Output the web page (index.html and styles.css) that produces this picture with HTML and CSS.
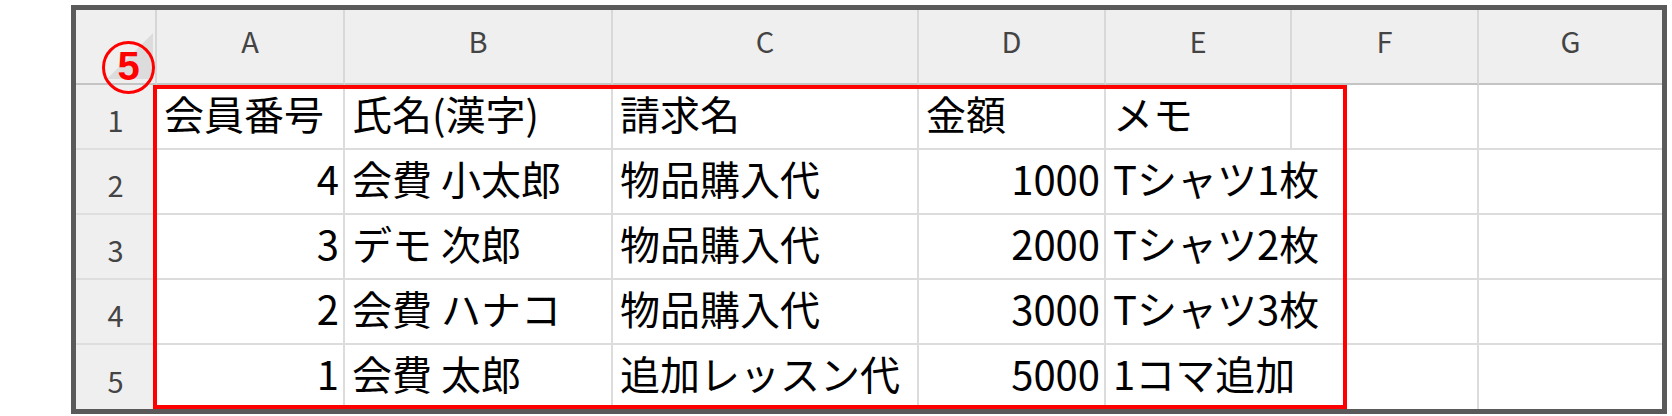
FILE: index.html
```html
<!DOCTYPE html>
<html lang="ja">
<head>
<meta charset="utf-8">
<title>Sheet</title>
<link rel="stylesheet" href="styles.css">
</head>
<body>
<div class="sheet">
  <div class="grid">
    <div class="corner"><svg class="tri" width="79" height="73" viewBox="0 0 79 73"><polygon points="77,23 77,69 31,69" fill="#dcdcdc"/></svg></div>
    <div class="h">A</div><div class="h">B</div><div class="h">C</div><div class="h">D</div><div class="h">E</div><div class="h">F</div><div class="h">G</div>

    <div class="r">1</div><div class="d">会員番号</div><div class="d">氏名(漢字)</div><div class="d">請求名</div><div class="d">金額</div><div class="d">メモ</div><div class="d"></div><div class="d"></div>

    <div class="r">2</div><div class="d num">4</div><div class="d">会費 小太郎</div><div class="d">物品購入代</div><div class="d num">1000</div><div class="d spill">Tシャツ1枚</div><div class="d"></div><div class="d"></div>

    <div class="r">3</div><div class="d num">3</div><div class="d">デモ 次郎</div><div class="d">物品購入代</div><div class="d num">2000</div><div class="d spill">Tシャツ2枚</div><div class="d"></div><div class="d"></div>

    <div class="r">4</div><div class="d num">2</div><div class="d">会費 ハナコ</div><div class="d">物品購入代</div><div class="d num">3000</div><div class="d spill">Tシャツ3枚</div><div class="d"></div><div class="d"></div>

    <div class="r">5</div><div class="d num">1</div><div class="d">会費 太郎</div><div class="d">追加レッスン代</div><div class="d num">5000</div><div class="d spill">1コマ追加</div><div class="d"></div><div class="d"></div>
  </div>
  <div class="highlight"></div>
  <div class="badge">5</div>
</div>
</body>
</html>
```

FILE: styles.css
```css
html, body {
  margin: 0;
  padding: 0;
  background: #ffffff;
}

.sheet {
  position: relative;
  box-sizing: border-box;
  width: 1596px;
  height: 409px;
  margin: 5px 0 0 71px;
  border: 5px solid #5a5a5a;
  background: #ffffff;
  overflow: hidden;
  font-family: "Noto Sans CJK JP", "Noto Sans", sans-serif;
}

.grid {
  display: grid;
  grid-template-columns: 81px 188px 268px 306px 187px 186px 187px 1fr;
  grid-template-rows: 75px 65px 65px 65px 65px 64px;
  height: 100%;
}

.grid > div {
  box-sizing: border-box;
  border-right: 2px solid #dcdcdc;
  border-bottom: 2px solid #dcdcdc;
  display: flex;
  align-items: center;
  white-space: nowrap;
  min-width: 0;
}

.grid > div:nth-child(8n) {
  border-right: none;
}

.grid > div:nth-last-child(-n+8) {
  border-bottom: none;
}

.corner {
  background: #efefef;
  border-bottom-color: #c4c4c4 !important;
  border-right-color: #d6d6d6 !important;
}

.tri {
  display: block;
}

.h {
  background: #efefef;
  border-right-color: #d8d8d8 !important;
  border-bottom-color: #c4c4c4 !important;
  justify-content: center;
  font-size: 29px;
  line-height: 1;
  color: #444444;
  padding-bottom: 12px;
}

.r {
  background: #efefef;
  border-bottom-color: #dedede !important;
  border-right-color: #c4c4c4 !important;
  justify-content: center;
  font-size: 29px;
  line-height: 1;
  color: #444444;
  padding-top: 6px;
}

.d {
  background: none;
  font-size: 40px;
  line-height: 1;
  color: #000000;
  padding: 0 4px 8px 7px;
  overflow: visible;
}

.num {
  justify-content: flex-end;
}

.spill {
  border-right: none !important;
}

.highlight {
  position: absolute;
  left: 77px;
  top: 75px;
  width: 1194px;
  height: 324px;
  box-sizing: border-box;
  border: 4px solid #ff0000;
}

.badge {
  position: absolute;
  left: 26px;
  top: 31px;
  width: 53px;
  height: 53px;
  box-sizing: border-box;
  border: 3px solid #ff0000;
  border-radius: 50%;
  display: flex;
  align-items: center;
  justify-content: center;
  font-family: "Liberation Sans", Arial, sans-serif;
  font-weight: bold;
  font-size: 40px;
  line-height: 1;
  color: #ff0000;
  padding-bottom: 4px;
}
```
